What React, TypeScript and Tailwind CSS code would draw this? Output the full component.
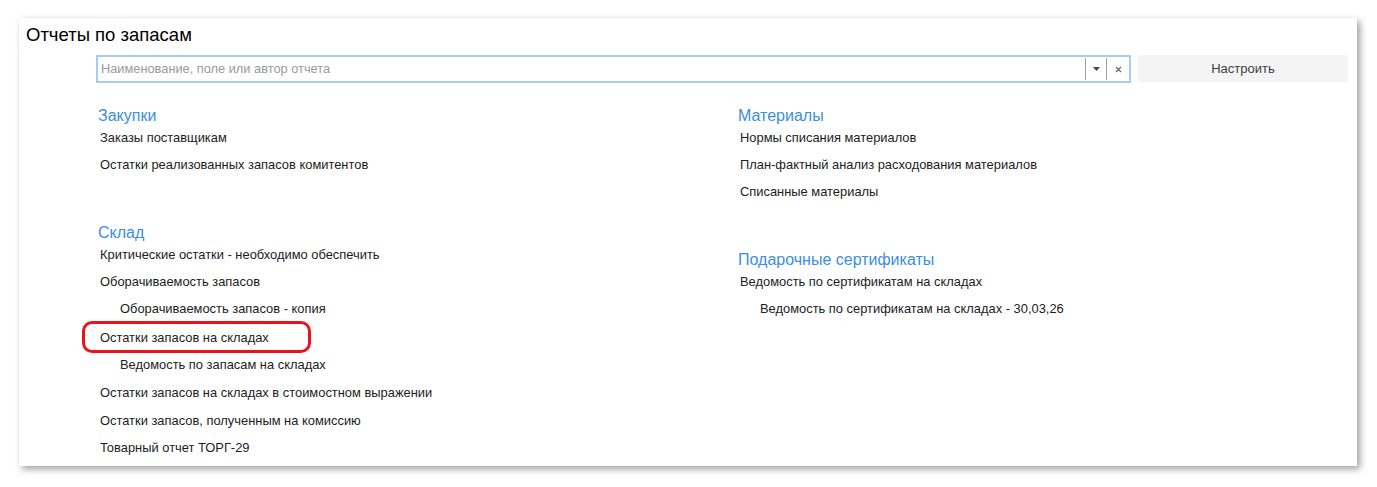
const groupsLeft = [
  {
    title: "Закупки",
    items: [
      { name: "Заказы поставщикам" },
      { name: "Остатки реализованных запасов комитентов" },
    ],
  },
  {
    title: "Склад",
    items: [
      { name: "Критические остатки - необходимо обеспечить" },
      { name: "Оборачиваемость запасов" },
      { name: "Оборачиваемость запасов - копия", sub: true },
      { name: "Остатки запасов на складах", marked: true, gap: "mt-[2px]" },
      { name: "Ведомость по запасам на складах", sub: true },
      { name: "Остатки запасов на складах в стоимостном выражении", gap: "mt-[1px]" },
      { name: "Остатки запасов, полученным на комиссию", gap: "mt-[1px]" },
      { name: "Товарный отчет ТОРГ-29" },
    ],
  },
];

const groupsRight = [
  {
    title: "Материалы",
    items: [
      { name: "Нормы списания материалов" },
      { name: "План-фактный анализ расходования материалов" },
      { name: "Списанные материалы" },
    ],
  },
  {
    title: "Подарочные сертификаты",
    items: [
      { name: "Ведомость по сертификатам на складах" },
      { name: "Ведомость по сертификатам на складах - 30,03,26", sub: true },
    ],
  },
];

type Item = { name: string; sub?: boolean; marked?: boolean; gap?: string };
type Group = { title: string; items: Item[] };

function Column({ groups }: { groups: Group[] }) {
  return (
    <div className="flex flex-col">
      {groups.map((g, i) => (
        <div key={g.title} className={i > 0 ? "mt-[46px]" : ""}>
          <div className="h-[17px] text-[16px] leading-[17px] text-[#3c8de3]">{g.title}</div>
          {g.items.map((it) => (
            <div
              key={it.name}
              className={`relative h-[27px] flex items-center text-[12.9px] text-[#1c1c1c] ${it.sub ? "pl-[22px]" : "pl-[2px]"} ${it.gap ?? ""}`}
            >
              {it.name}
              {it.marked && (
                <div className="absolute left-[-16px] top-[-3px] w-[229px] h-[32px] border-[3px] border-[#e8141c] rounded-[10px]" />
              )}
            </div>
          ))}
        </div>
      ))}
    </div>
  );
}

export default function App() {
  return (
    <div className="min-h-screen bg-white pt-[18px] pl-[19px] font-['Liberation_Sans',Arial,sans-serif]">
      <div className="w-[1338px] h-[448px] bg-white shadow-[3px_3px_7px_rgba(0,0,0,0.38)]">
        <div className="pt-[6px] pl-[7px] text-[18.5px] leading-[21px] text-black">Отчеты по запасам</div>

        {/* Search row */}
        <div className="mt-[10px] pl-[77px] flex items-start">
          <div className="w-[1035px] h-[28px] border-2 border-[#a8ccf2] flex items-center">
            <div className="flex-1 pl-[3px] text-[12.8px] text-[#9a9a9a]">Наименование, поле или автор отчета</div>
            <div className="w-px h-[22px] bg-[#a0a0a0]" />
            <div className="w-[20px] flex justify-center">
              <svg width="7" height="4" viewBox="0 0 7 4">
                <path d="M0 0h7L3.5 4z" fill="#444" />
              </svg>
            </div>
            <div className="w-px h-[22px] bg-[#a0a0a0]" />
            <div className="w-[22px] flex justify-center">
              <svg width="7" height="7" viewBox="0 0 7 7">
                <path d="M1 1l5 5M6 1L1 6" stroke="#666" strokeWidth="1.2" />
              </svg>
            </div>
          </div>
          <button className="ml-[7px] w-[210px] h-[27px] bg-[#f4f4f4] text-[13px] text-[#404040]">Настроить</button>
        </div>

        {/* Report groups */}
        <div className="mt-[24px] pl-[79px] grid grid-cols-[640px_1fr]">
          <Column groups={groupsLeft} />
          <Column groups={groupsRight} />
        </div>
      </div>
    </div>
  );
}
